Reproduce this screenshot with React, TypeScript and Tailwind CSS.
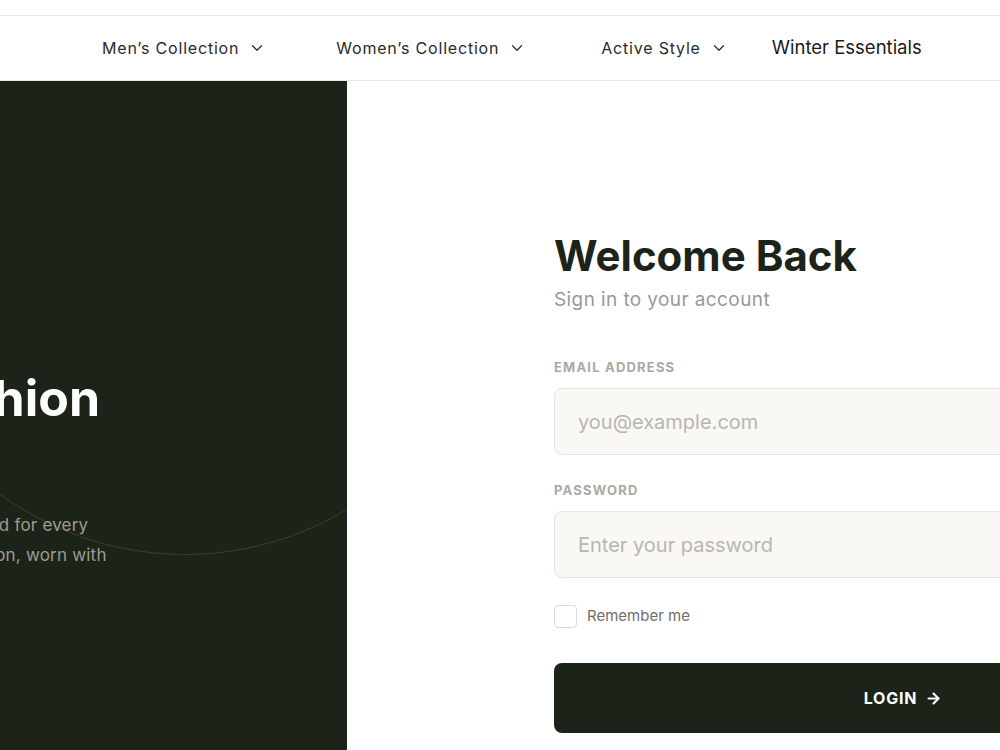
import React, { useState } from "react";
import { ChevronDown, ArrowRight } from "lucide-react";

const navItems = [
  { label: "Men’s Collection", gap: "mr-[70px]" },
  { label: "Women’s Collection", gap: "mr-[75px]" },
  { label: "Active Style", gap: "mr-[44px]" },
];

export default function App() {
  const [remember, setRemember] = useState(false);

  return (
    <div className="w-[1000px] h-[750px] overflow-hidden bg-white font-['Inter',sans-serif]">
      {/* top strip */}
      <div className="h-[16px] border-b border-[#e6e6e6]" />

      {/* Nav */}
      <nav className="h-[65px] border-b border-[#e6e6e6] flex items-center pl-[102px] pb-[1px]">
        {navItems.map((item) => (
          <div key={item.label} className={`flex items-center ${item.gap} text-[16px] tracking-[0.8px] text-[#2b2b2b]`}>
            <span>{item.label}</span>
            <ChevronDown size={18} strokeWidth={1.8} className="ml-[9px] text-[#333]" />
          </div>
        ))}
        <span className="text-[18.5px] text-[#1a1a1a]">Winter Essentials</span>
      </nav>

      <div className="flex h-[669px]">
        {/* Left brand panel */}
        <aside className="relative w-[347px] shrink-0 bg-[#1c2318] overflow-hidden">
          <div className="absolute left-[-129px] top-[-154px] w-[628px] h-[628px] rounded-full border border-[#a08c5a]/25" />
          <div className="relative pt-[287px]">
            <h2 className="-ml-[92px] whitespace-nowrap text-[50px] font-bold leading-[60px] text-white">Fashion</h2>
            <p className="mt-[82px] whitespace-nowrap text-[17px] leading-[30px] tracking-[0.2px] text-[#9c9d94]">
              <span className="block -ml-[204px]">Timeless pieces designed for every</span>
              <span className="block -ml-[158px]">season and occasion, worn with</span>
            </p>
          </div>
        </aside>

        {/* Login form */}
        <main className="flex-1 pl-[207px] pt-[150px] overflow-hidden">
          <div className="w-[698px]">
            <h1 className="text-[42px] leading-[50px] font-bold text-[#1c2318]">Welcome Back</h1>
            <p className="mt-[6px] text-[19px] leading-[26px] tracking-[0.4px] text-[#9a9995]">Sign in to your account</p>

            <label className="block mt-[46px] text-[13px] leading-[16px] font-bold tracking-[1.2px] text-[#aba9a4]">
              EMAIL ADDRESS
            </label>
            <input
              type="email"
              placeholder="you@example.com"
              className="mt-[13px] w-full h-[67px] px-[23px] rounded-[8px] border border-[#e8e5df] bg-[#f9f8f5] text-[20px] text-[#1c2318] placeholder:text-[#b8b6b1] outline-none"
            />

            <label className="block mt-[27px] text-[13px] leading-[16px] font-bold tracking-[1.2px] text-[#aba9a4]">
              PASSWORD
            </label>
            <input
              type="password"
              placeholder="Enter your password"
              className="mt-[13px] w-full h-[67px] px-[23px] rounded-[8px] border border-[#e8e5df] bg-[#f9f8f5] text-[20px] text-[#1c2318] placeholder:text-[#b8b6b1] outline-none"
            />

            <label className="mt-[27px] flex items-center gap-[10px] cursor-pointer">
              <span
                onClick={() => setRemember(!remember)}
                className={`w-[23px] h-[23px] rounded-[4px] border ${remember ? "bg-[#1c2318] border-[#1c2318]" : "border-[#dcdad5] bg-white"}`}
              />
              <span className="text-[15px] text-[#6f6e6a]">Remember me</span>
            </label>

            <button className="mt-[35px] w-full h-[70px] rounded-[8px] bg-[#1c2318] flex items-center justify-center gap-[8px] text-white">
              <span className="text-[16px] font-bold tracking-[0.8px]">LOGIN</span>
              <ArrowRight size={17} strokeWidth={3} />
            </button>
          </div>
        </main>
      </div>
    </div>
  );
}
